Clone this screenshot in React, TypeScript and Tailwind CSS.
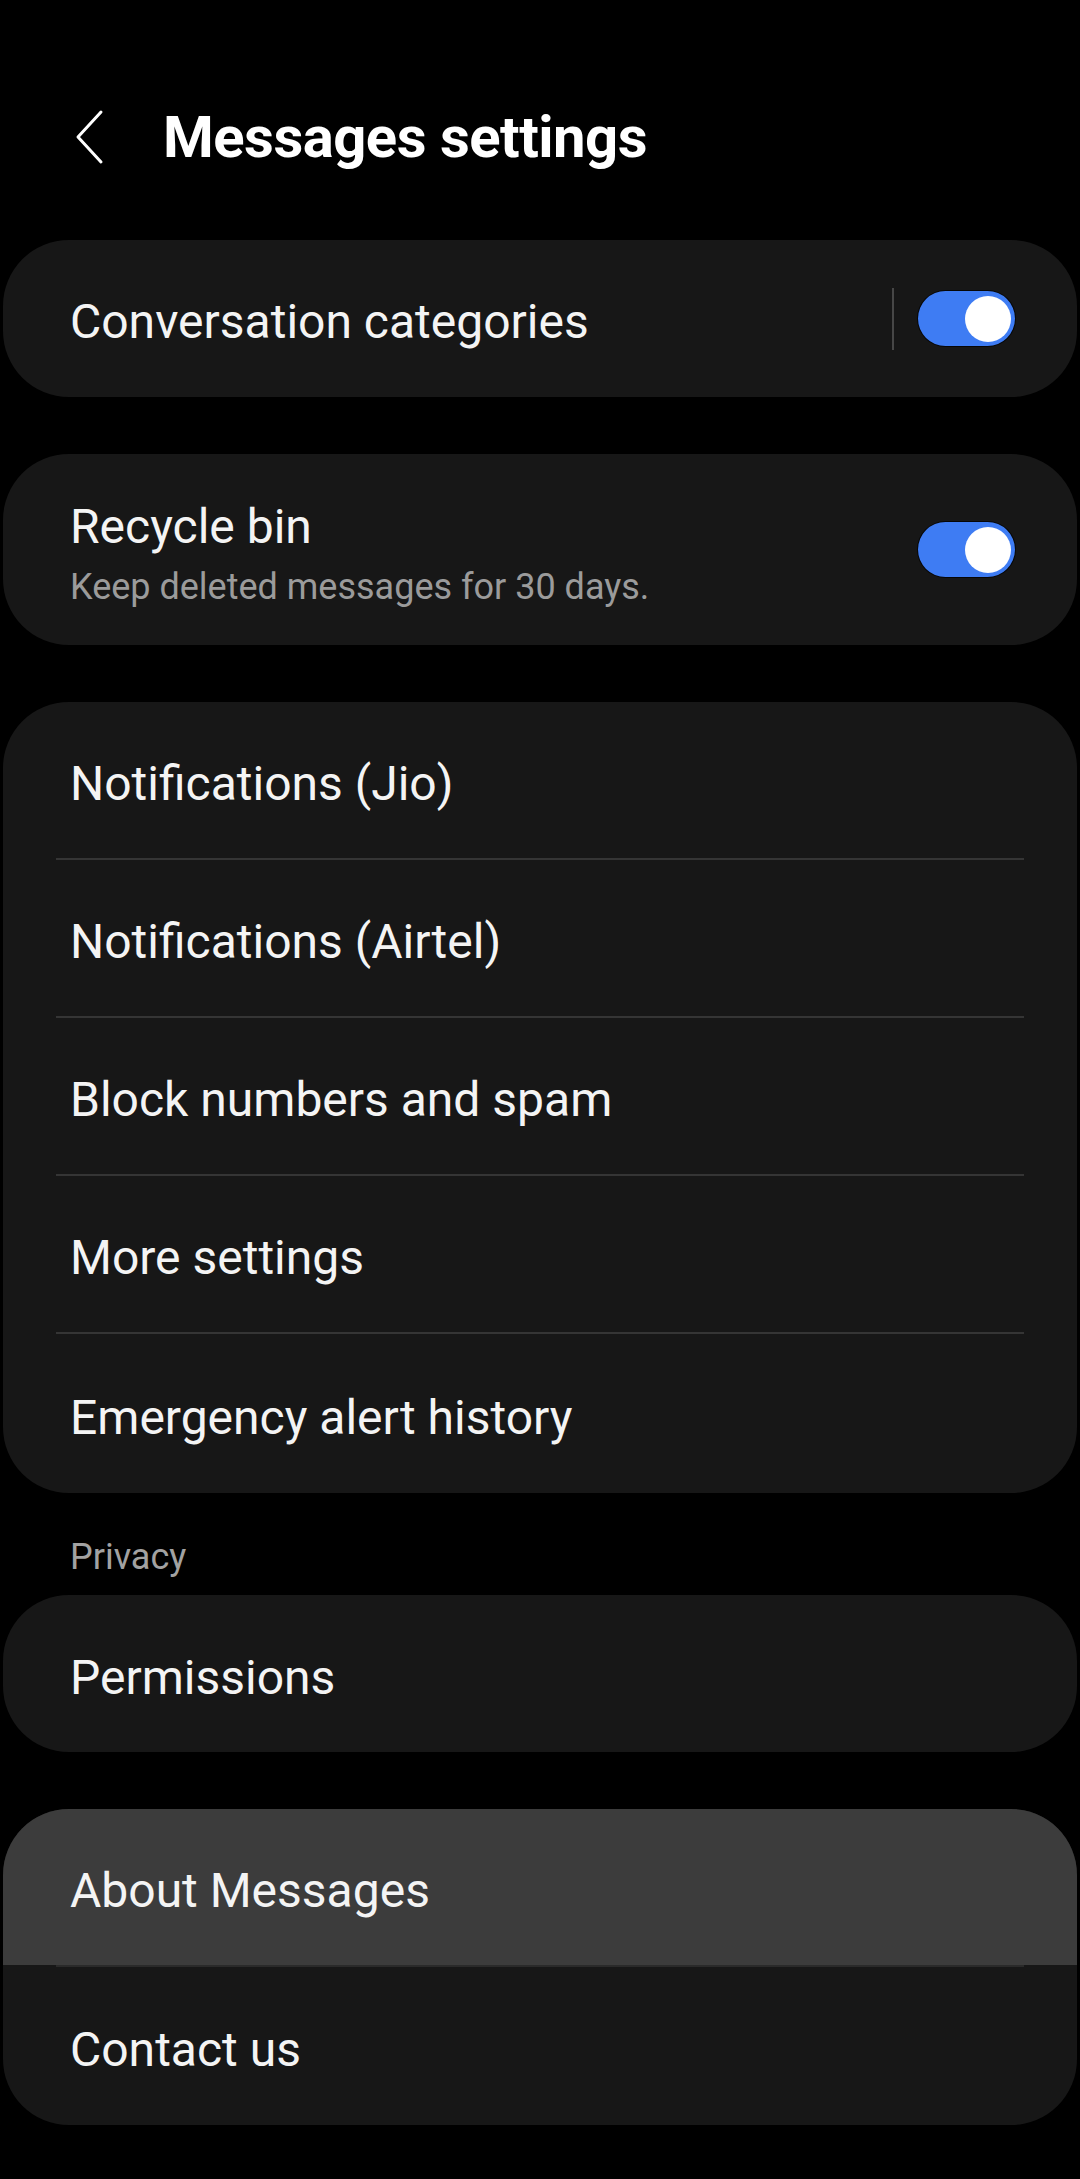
import React from 'react';

const font = { fontFamily: 'Roboto, "Noto Sans", sans-serif' };

function Toggle() {
  return (
    <div className="w-[97px] h-[55px] rounded-full bg-[#3e7cf3] flex items-center justify-end pr-[4px] ring-1 ring-black/70">
      <div className="w-[46px] h-[46px] rounded-full bg-white" />
    </div>
  );
}

function Divider() {
  return <div className="h-[2px] mx-[53px] bg-[#353535]" />;
}

function Row({ label, className = 'h-[156px]' }: { label: string; className?: string }) {
  return (
    <div className={`flex items-center pl-[67px] pt-[8px] ${className}`}>
      <span className="text-[48px] text-[#f4f4f4] leading-none">{label}</span>
    </div>
  );
}

export default function App() {
  const main = ['Notifications (Jio)', 'Notifications (Airtel)', 'Block numbers and spam', 'More settings', 'Emergency alert history'];

  return (
    <div className="w-[1080px] min-h-[2179px] bg-black px-[3px]" style={font}>
      {/* Header */}
      <div className="h-[240px] pt-[34px] flex items-center">
        <svg width="32" height="56" viewBox="0 0 32 56" className="ml-[71px]" fill="none" stroke="#fff" strokeWidth={3} strokeLinecap="round" strokeLinejoin="round">
          <path d="M27 3 L4 28 L27 53" />
        </svg>
        <h1 className="ml-[57px] text-[58px] font-bold text-white leading-none tracking-[-0.5px]">Messages settings</h1>
      </div>

      {/* Conversation categories */}
      <div className="h-[157px] rounded-[66px] bg-[#171717] flex items-center pl-[67px] pr-[62px]">
        <span className="flex-1 text-[48px] text-[#f4f4f4] leading-none pt-[6px]">Conversation categories</span>
        <div className="w-[2px] h-[62px] bg-[#474747] mr-[24px]" />
        <Toggle />
      </div>

      {/* Recycle bin */}
      <div className="mt-[57px] h-[191px] rounded-[66px] bg-[#171717] flex items-center pl-[67px] pr-[62px]">
        <div className="flex-1 flex flex-col pt-[8px]">
          <span className="text-[48px] text-[#f4f4f4] leading-none">Recycle bin</span>
          <span className="mt-[18px] text-[36px] text-[#9b9b9b] leading-none">Keep deleted messages for 30 days.</span>
        </div>
        <Toggle />
      </div>

      {/* Main list */}
      <div className="mt-[57px] rounded-[66px] bg-[#171717] overflow-hidden">
        {main.map((m, i) => (
          <div key={m}>
            {i > 0 && <Divider />}
            <Row label={m} className={i === main.length - 1 ? 'h-[159px]' : 'h-[156px]'} />
          </div>
        ))}
      </div>

      {/* Privacy */}
      <div className="pt-[46px] pb-[20px] pl-[67px] text-[36px] text-[#a2a2a2] leading-none">Privacy</div>
      <div className="h-[157px] rounded-[66px] bg-[#171717] flex items-center pl-[67px] pt-[8px]">
        <span className="text-[48px] text-[#f4f4f4] leading-none">Permissions</span>
      </div>

      {/* About */}
      <div className="mt-[57px] rounded-[66px] bg-[#171717] overflow-hidden">
        <Row label="About Messages" className="h-[156px] bg-[#3c3c3c]" />
        <div className="h-[2px] bg-[#171717]">
          <div className="h-[2px] mx-[53px] bg-[#2a2a2a]" />
        </div>
        <Row label="Contact us" className="h-[158px]" />
      </div>
    </div>
  );
}
